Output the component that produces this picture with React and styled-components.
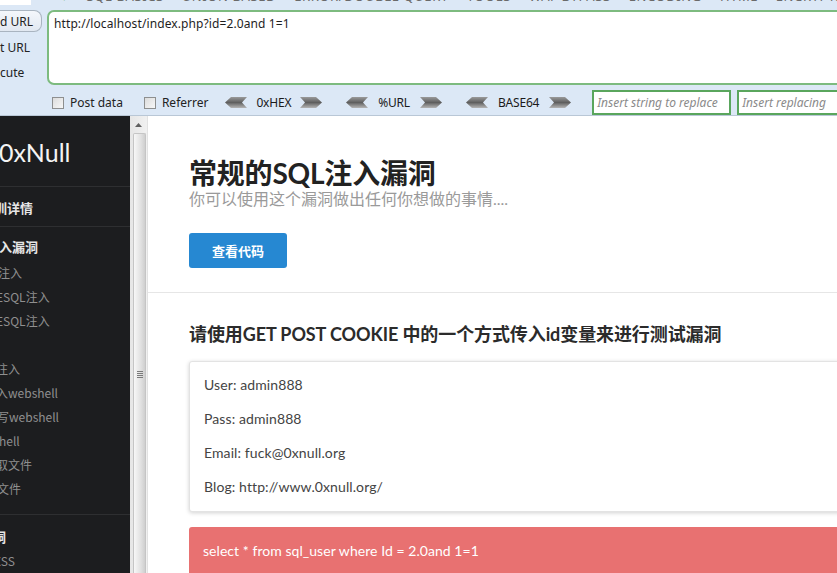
import React from "react";
import styled, { createGlobalStyle } from "styled-components";

const Global = createGlobalStyle`
  html, body { margin: 0; padding: 0; width: 837px; height: 573px; overflow: hidden; background: #fff; }
  * { box-sizing: border-box; }
`;

const Page = styled.div`
  width: 837px;
  height: 573px;
  display: flex;
  flex-direction: column;
  overflow: hidden;
`;

const Bar = styled.div`
  height: 116px;
  background: #dce8f6;
  border-bottom: 1px solid #b9c7d6;
  display: flex;
  flex-direction: column;
  font-family: "Noto Sans", "Noto Sans CJK SC", sans-serif;
  overflow: hidden;
`;

const MenuStrip = styled.div`
  height: 6px;
  overflow: hidden;
  display: flex;
`;

const MenuInput = styled.div`
  width: 31px;
  height: 6px;
  background: #fff;
  flex: none;
`;

const MenuItems = styled.div`
  display: flex;
  gap: 18px;
  margin-top: -12px;
  padding-left: 30px;
  font-size: 13px;
  line-height: 16px;
  color: #6a6a6a;
  white-space: nowrap;
  letter-spacing: 0.6px;
`;

const MenuDot = styled.span`
  color: #3a9a3a;
`;

const BarBody = styled.div`
  display: flex;
  padding-top: 4px;
  height: 80px;
`;

const LeftCol = styled.div`
  width: 47px;
  flex: none;
  display: flex;
  flex-direction: column;
  font-size: 12px;
  color: #222;
`;

const LoadBtn = styled.div`
  height: 22px;
  width: 42px;
  margin-top: 1px;
  border: 1px solid #a9b4c0;
  border-left: none;
  border-radius: 0 8px 8px 0;
  background: linear-gradient(#f4f7fb, #e1e8f1);
  display: flex;
  align-items: center;
  white-space: nowrap;
`;

const PlainBtn = styled.div`
  height: 25px;
  display: flex;
  align-items: center;
  white-space: nowrap;
  margin-top: ${(p) => p.$mt || 0}px;
`;

const UrlBox = styled.div`
  flex: 1;
  height: 75px;
  margin-top: 1px;
  margin-right: -10px;
  background: #fff;
  border: 2px solid #7dbb7f;
  border-radius: 7px 0 0 7px;
  padding: 3px 5px;
  font-size: 12px;
  color: #1e1e1e;
  letter-spacing: 0.1px;
`;

const OptRow = styled.div`
  display: flex;
  align-items: center;
  height: 26px;
  margin-top: 5px;
  padding-left: 52px;
  font-size: 12px;
  color: #222;
  white-space: nowrap;
`;

const Check = styled.span`
  width: 12px;
  height: 12px;
  border: 1px solid #8e8f8f;
  background: linear-gradient(135deg, #dcdcdc, #f7f7f7);
  display: inline-block;
  margin-right: 6px;
  flex: none;
`;

const Opt = styled.label`
  display: flex;
  align-items: center;
  margin-right: ${(p) => p.$mr}px;
`;

const EncLabel = styled.span`
  color: #1a1a1a;
  margin: 0 ${(p) => p.$m}px;
  letter-spacing: -0.2px;
`;

const Gap = styled.span`
  width: ${(p) => p.$w}px;
  flex: none;
`;

const ReplaceInput = styled.div`
  width: ${(p) => p.$w}px;
  height: 25px;
  flex: none;
  border: 2px solid #5aa65d;
  background: #fff;
  margin-left: ${(p) => p.$ml}px;
  font-style: italic;
  color: #8a8a8a;
  font-size: 12px;
  display: flex;
  align-items: center;
  padding-left: 3px;
  overflow: hidden;
  white-space: nowrap;
`;

const Main = styled.div`
  flex: 1;
  display: flex;
  min-height: 0;
`;

const Sidebar = styled.nav`
  width: 130px;
  flex: none;
  background: #1c1d1f;
  font-family: "Noto Sans CJK SC", "Noto Sans", sans-serif;
  overflow: hidden;
  display: flex;
  flex-direction: column;
`;

const Logo = styled.div`
  height: 71px;
  display: flex;
  align-items: center;
  padding-top: 2px;
  font-family: Lato, "Noto Sans", sans-serif;
  font-size: 25px;
  color: #f4f4f4;
  border-bottom: 1px solid #2e2f31;
  margin-left: -1px;
`;

const Section = styled.div`
  border-bottom: ${(p) => (p.$last ? "none" : "1px solid #2e2f31")};
  padding: ${(p) => p.$pt}px 0 ${(p) => p.$pb}px;
`;

const Head = styled.div`
  height: ${(p) => p.$h || 24}px;
  line-height: 24px;
  font-size: 13px;
  font-weight: 700;
  color: #e6e6e6;
  white-space: nowrap;
  margin-left: ${(p) => p.$ml || 0}px;
`;

const Item = styled.div`
  height: 24px;
  line-height: 24px;
  font-size: 12px;
  color: #8f8f8f;
  white-space: nowrap;
  margin-left: ${(p) => p.$ml || 0}px;
`;

const Scroll = styled.div`
  width: 18px;
  flex: none;
  background: linear-gradient(90deg, #e6e6e6, #f1f1f1);
  border-right: 1px solid #e2e2e2;
  display: flex;
  flex-direction: column;
  align-items: center;
`;

const ScrollUp = styled.div`
  height: 17px;
  display: flex;
  align-items: center;
  justify-content: center;
`;

const Thumb = styled.div`
  flex: 1;
  width: 13px;
  margin-left: 2px;
  border: 1px solid #c5c5c5;
  border-bottom: none;
  border-radius: 2px 2px 0 0;
  background: linear-gradient(90deg, #f7f7f7, #e2e2e2 60%, #cfcfcf);
  display: flex;
  justify-content: center;
  padding-top: 237px;
`;

const Grip = styled.div`
  width: 6px;
  height: 7px;
  background: repeating-linear-gradient(#7a7a7a 0 1px, transparent 1px 2px);
`;

const Content = styled.main`
  flex: 1;
  min-width: 0;
  background: #fff;
  font-family: Lato, "Noto Sans CJK SC", sans-serif;
  overflow: hidden;
`;

const Hero = styled.header`
  height: 177px;
  border-bottom: 1px solid #e6e6e6;
  padding: 40px 0 0 41px;
`;

const Title = styled.h1`
  margin: 0;
  font-size: 28px;
  line-height: 34px;
  font-weight: 700;
  color: #222;
  letter-spacing: -0.2px;
`;

const Sub = styled.p`
  margin: -2px 0 0;
  font-size: 16px;
  line-height: 22px;
  color: #9a9a9a;
`;

const Button = styled.button`
  margin-top: 23px;
  width: 98px;
  height: 35px;
  border: none;
  border-radius: 3px;
  background: #2688d2;
  color: #fff;
  font-family: "Noto Sans CJK SC", sans-serif;
  font-size: 13px;
  font-weight: 700;
  cursor: pointer;
`;

const Body = styled.section`
  padding: 29px 0 0 41px;
  margin-right: -30px;
`;

const H2 = styled.h2`
  margin: 0;
  font-size: 18px;
  line-height: 24px;
  font-weight: 700;
  color: #2b2b2b;
  letter-spacing: -0.1px;
  white-space: nowrap;
`;

const Card = styled.div`
  margin-top: 15px;
  height: 151px;
  background: #fff;
  border: 1px solid #e3e3e3;
  border-radius: 3px;
  box-shadow: 0 1px 4px rgba(0, 0, 0, 0.18);
  padding: 13px 14px;
`;

const Line = styled.p`
  margin: 0 0 14px;
  font-size: 14px;
  line-height: 20px;
  color: #444;
  letter-spacing: 0.1px;
`;

const Alert = styled.div`
  margin-top: 15px;
  height: 60px;
  background: #e87171;
  border-radius: 3px;
  padding: 14px 14px;
  font-size: 14px;
  line-height: 20px;
  color: #fff;
  letter-spacing: 0.05px;
`;

const Arrow = ({ dir }) => (
  <svg width="22" height="11" viewBox="0 0 22 11" style={{ flex: "none" }}>
    <defs>
      <linearGradient id={"g" + dir} x1="0" y1="0" x2="0" y2="1">
        <stop offset="0" stopColor="#9a9a9a" />
        <stop offset="0.5" stopColor="#5f5f5f" />
        <stop offset="1" stopColor="#b5b5b5" />
      </linearGradient>
    </defs>
    {dir === "l" ? (
      <polygon points="6,0 22,0 17,5.5 22,11 6,11 0,5.5" fill={"url(#g" + dir + ")"} />
    ) : (
      <polygon points="0,0 16,0 22,5.5 16,11 0,11 5,5.5" fill={"url(#g" + dir + ")"} />
    )}
  </svg>
);

const menu = ["SQL BASICS", "UNION BASED", "ERROR/DOUBLE QUERY", "TOOLS", "WAF BYPASS", "ENCODING", "HTML", "ENCRYPTION", "OTHER"];

export default function App() {
  return (
    <Page>
      <Global />
      <Bar>
        <MenuStrip>
          <MenuInput />
          <MenuItems>
            <MenuDot>▾</MenuDot>
            {menu.map((m) => (
              <span key={m}>{m}</span>
            ))}
          </MenuItems>
        </MenuStrip>
        <BarBody>
          <LeftCol>
            <LoadBtn>d URL</LoadBtn>
            <PlainBtn $mt={3}>t URL</PlainBtn>
            <PlainBtn>cute</PlainBtn>
          </LeftCol>
          <UrlBox>http://localhost/index.php?id=2.0and 1=1</UrlBox>
        </BarBody>
        <OptRow>
          <Opt $mr={21}>
            <Check />
            Post data
          </Opt>
          <Opt $mr={17}>
            <Check />
            Referrer
          </Opt>
          <Arrow dir="l" />
          <EncLabel $m={9}>0xHEX</EncLabel>
          <Arrow dir="r" />
          <Gap $w={24} />
          <Arrow dir="l" />
          <EncLabel $m={10}>%URL</EncLabel>
          <Arrow dir="r" />
          <Gap $w={24} />
          <Arrow dir="l" />
          <EncLabel $m={10}>BASE64</EncLabel>
          <Arrow dir="r" />
          <ReplaceInput $w={139} $ml={21}>Insert string to replace</ReplaceInput>
          <ReplaceInput $w={110} $ml={6}>Insert replacing</ReplaceInput>
        </OptRow>
      </Bar>
      <Main>
        <Sidebar>
          <Logo>0xNull</Logo>
          <Section $pt={9} $pb={6}>
            <Head $ml={-19}>实训详情</Head>
          </Section>
          <Section $pt={8} $pb={13}>
            <Head $ml={-14} $h={26}>注入漏洞</Head>
            <Item $ml={-2}>注入</Item>
            <Item $ml={-4}>ESQL注入</Item>
            <Item $ml={-4}>ESQL注入</Item>
            <Item $ml={-8}>、</Item>
            <Item $ml={-4}>注入</Item>
            <Item $ml={-4}>入webshell</Item>
            <Item $ml={-3}>写webshell</Item>
            <Item $ml={-1}>hell</Item>
            <Item $ml={-4}>取文件</Item>
            <Item $ml={-3}>文件</Item>
          </Section>
          <Section $pt={10} $pb={0} $last>
            <Head $ml={-7}>洞</Head>
            <Item $ml={-6}>XSS</Item>
          </Section>
        </Sidebar>
        <Scroll>
          <ScrollUp>
            <svg width="7" height="4" viewBox="0 0 7 4">
              <polygon points="3.5,0 7,4 0,4" fill="#606060" />
            </svg>
          </ScrollUp>
          <Thumb>
            <Grip />
          </Thumb>
        </Scroll>
        <Content>
          <Hero>
            <Title>常规的SQL注入漏洞</Title>
            <Sub>你可以使用这个漏洞做出任何你想做的事情....</Sub>
            <Button>查看代码</Button>
          </Hero>
          <Body>
            <H2>请使用GET POST COOKIE 中的一个方式传入id变量来进行测试漏洞</H2>
            <Card>
              <Line>User: admin888</Line>
              <Line>Pass: admin888</Line>
              <Line>Email: fuck@0xnull.org</Line>
              <Line>Blog: http://www.0xnull.org/</Line>
            </Card>
            <Alert>select * from sql_user where Id = 2.0and 1=1</Alert>
          </Body>
        </Content>
      </Main>
    </Page>
  );
}
